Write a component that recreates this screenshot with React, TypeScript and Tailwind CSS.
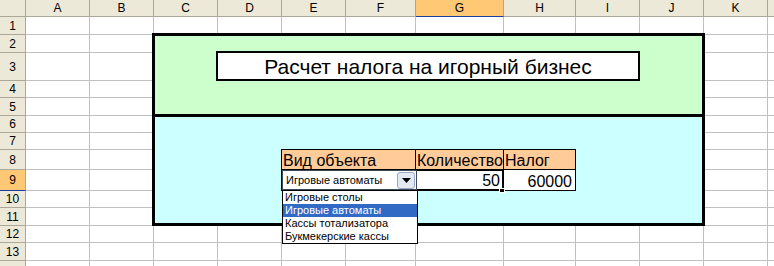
import React from 'react';

const colLetters = ['', 'A', 'B', 'C', 'D', 'E', 'F', 'G', 'H', 'I', 'J', 'K', ''];
const rowNums = [1, 2, 3, 4, 5, 6, 7, 8, 9, 10, 11, 12, 13, 14];
const options = ['Игровые столы', 'Игровые автоматы', 'Кассы тотализатора', 'Букмекерские кассы'];

const ActiveCol = 'G';
const ActiveRow = 9;

const App: React.FC = () => {
    return (
        <div className="w-[774px] h-[266px] overflow-hidden bg-white font-['Liberation_Sans',Arial,sans-serif] text-black">
            <div className="grid grid-cols-[26px_64px_64px_64px_64px_64px_70px_88px_72px_64px_64px_64px_64px] grid-rows-[17px_18px_18px_28px_17px_18px_17px_17px_20px_21px_17px_18px_17px_18px_17px]">
                {/* column headers */}
                {colLetters.map((c, i) => (
                    <div
                        key={'h' + i}
                        style={{ gridColumn: i + 1, gridRow: 1 }}
                        className={
                            c === ActiveCol
                                ? 'flex items-center justify-center text-[12px] bg-[#ffc874] border-r border-r-[#aca899] border-b border-b-[#203c9a]'
                                : 'flex items-center justify-center text-[12px] bg-[#ece9d8] border-r border-b border-[#aca899]'
                        }
                    >
                        {c}
                    </div>
                ))}

                {/* rows (row 14 is cut by the window, its number not visible) */}
                {rowNums.map((r) => (
                    <React.Fragment key={'r' + r}>
                        <div
                            style={{ gridColumn: 1, gridRow: r + 1 }}
                            className={
                                r === ActiveRow
                                    ? 'flex items-center justify-center text-[12px] bg-[#ffc874] border-r border-r-[#aca899] border-b border-b-[#203c9a]'
                                    : 'flex items-center justify-center text-[12px] bg-[#ece9d8] border-r border-b border-[#aca899]'
                            }
                        >
                            {r < 14 ? r : ''}
                        </div>
                        {colLetters.slice(1).map((_, ci) => (
                            <div
                                key={'c' + r + '-' + ci}
                                style={{ gridColumn: ci + 2, gridRow: r + 1 }}
                                className="bg-white border-r border-b border-[#c0c0c0]"
                            />
                        ))}
                    </React.Fragment>
                ))}

                {/* C2:J11 framed block */}
                <div className="col-[4/12] row-[3/13] -ml-[2px] -mr-px -mt-[2px] border-[3px] border-black flex flex-col">
                    <div className="h-[81px] bg-[#ccffcc] border-b-[3px] border-black" />
                    <div className="flex-1 bg-[#ccffff]" />
                </div>

                {/* title D3:I3 */}
                <div className="col-[5/11] row-[4/5] -ml-[2px] -mt-[2px] border-2 border-black bg-white flex items-center justify-center text-[21px] leading-none">
                    Расчет налога на игорный бизнес
                </div>

                {/* table header row 8 */}
                <div className="col-[6/8] row-[9/10] -ml-px -mt-px border border-black bg-[#ffcc99] flex items-end pl-px text-[16px] leading-none">
                    Вид объекта
                </div>
                <div className="col-[8/9] row-[9/10] -ml-px -mt-px border border-black bg-[#ffcc99] flex items-end pl-px text-[16px] leading-none">
                    Количество
                </div>
                <div className="col-[9/10] row-[9/10] -ml-px -mt-px border border-black bg-[#ffcc99] flex items-end pl-px text-[16px] leading-none">
                    Налог
                </div>

                {/* table row 9 */}
                <div className="col-[9/10] row-[10/11] -ml-px -mt-px border border-black bg-white flex items-end justify-end pr-[3px] text-[16px] leading-none">
                    60000
                </div>
                <div className="relative col-[8/9] row-[10/11] -ml-px -mt-px border-2 border-black bg-white flex items-end justify-end pr-[2px] text-[16px] leading-none">
                    50
                    <span className="absolute -right-[3px] -bottom-[4px] w-[6px] h-[5px] bg-black border border-white" />
                </div>
                <div className="relative z-10 col-[6/8] row-[10/11] -ml-px -mt-px border border-black bg-white">
                    {/* combo box control */}
                    <div className="absolute left-0 top-0 -right-[2px] bottom-0 flex items-center bg-white border border-[#3c4a5c]">
                        <span className="flex-1 pl-[3px] text-[11px] leading-none">Игровые автоматы</span>
                        <span className="w-[18px] h-[17px] mr-px rounded-[3px] border border-[#98a8c8] bg-[#e3e8f2] flex items-center justify-center">
                            <svg width="9" height="5" viewBox="0 0 9 5">
                                <path d="M0 0 H9 L4.5 5 Z" fill="#000" />
                            </svg>
                        </span>
                    </div>
                    {/* open list */}
                    <div className="absolute left-0 top-[20px] -right-[3px] bg-white border border-black">
                        {options.map((o) => (
                            <div
                                key={o}
                                className={
                                    o === 'Игровые автоматы'
                                        ? 'h-[13px] pl-[2px] text-[11px] leading-[13px] bg-[#316ac5] text-white'
                                        : 'h-[13px] pl-[2px] text-[11px] leading-[13px] text-black'
                                }
                            >
                                {o}
                            </div>
                        ))}
                    </div>
                </div>
            </div>
        </div>
    );
};

export default App;
